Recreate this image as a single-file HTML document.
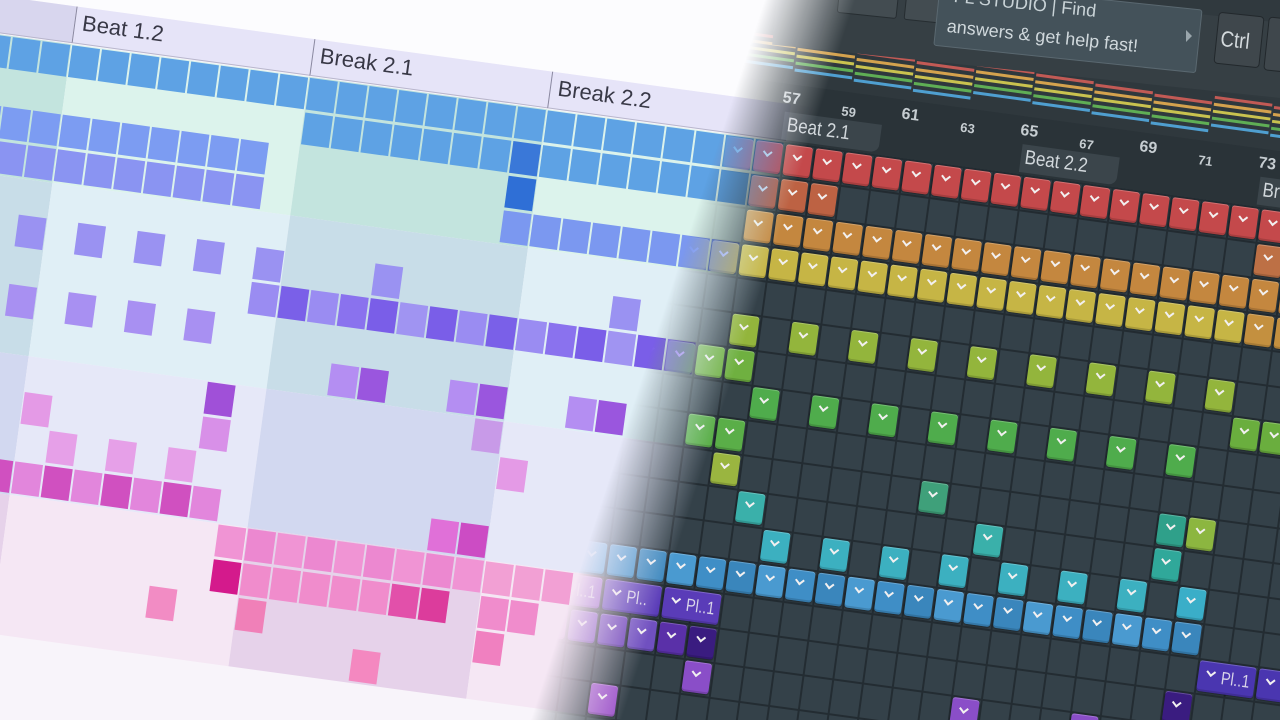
<!DOCTYPE html>
<html><head><meta charset="utf-8">
<style>
html,body{margin:0;padding:0;width:1280px;height:720px;overflow:hidden;background:#fbfafd;}
.layer{position:absolute;left:0;top:0;width:1280px;height:720px;overflow:hidden;}
#light{background:#f8f4fa;}
#dark{background:#2c363c;-webkit-mask-image:linear-gradient(108deg,transparent 50.5%,#000 56.5%);mask-image:linear-gradient(108deg,transparent 50.5%,#000 56.5%);}
.fr{position:absolute;left:12px;top:36px;width:0;height:0;transform:rotate(7.8deg);transform-origin:0 0;}
.a{position:absolute;}
.lt{position:absolute;width:28px;height:32px;}
.dt{position:absolute;width:27px;height:31px;border-radius:3px;box-shadow:inset 0 1px 0 rgba(255,255,255,.22),inset 0 -2px 0 rgba(0,0,0,.15),0 1px 2px rgba(0,0,0,.5);}
.dt i{position:absolute;left:9px;top:7px;width:5px;height:5px;border-left:2px solid #f2f0f0;border-bottom:2px solid #f2f0f0;transform:rotate(-45deg);}
.dt b{position:absolute;left:23px;top:5px;font:normal 18px "Liberation Sans",sans-serif;color:#d8d4e8;transform:scaleX(.8);transform-origin:0 0;white-space:nowrap;}
.hl{position:absolute;font:22px "Liberation Sans",sans-serif;color:#383846;white-space:nowrap;}
.num{position:absolute;font:bold 15px "Liberation Sans",sans-serif;color:#c6cdd1;}
.lab{position:absolute;font:20px "Liberation Sans",sans-serif;color:#d2d8dc;transform:scaleX(.85);transform-origin:0 0;white-space:nowrap;}
</style></head><body>
<div id="light" class="layer"><div class="fr" id="lf"></div></div>
<div id="dark" class="layer">
  <div class="fr" id="df"></div>
  <div class="a" style="left:780px;top:-30px;width:560px;height:75px;background:#363f44;transform:rotate(6deg);transform-origin:0 0;"></div>
  <div class="a" style="left:838px;top:-12px;width:58px;height:26px;background:#434c51;border:1px solid #262d31;border-radius:3px;transform:rotate(6deg);"></div>
  <div class="a" style="left:905px;top:-8px;width:40px;height:28px;background:#434c51;border:1px solid #262d31;border-radius:3px;transform:rotate(6deg);"></div>
  <div class="a" style="left:940px;top:-18px;width:262px;height:62px;background:#44525a;border:1px solid #5a6870;border-radius:3px;transform:rotate(6deg);transform-origin:0 0;"></div>
  <div class="a" style="left:955px;top:-14px;font:18px 'Liberation Sans',sans-serif;color:#c8d2d6;transform:rotate(6deg);transform-origin:0 0;white-space:nowrap;">FL STUDIO | Find</div>
  <div class="a" style="left:948px;top:16px;font:18px 'Liberation Sans',sans-serif;color:#d0d8dc;transform:rotate(6deg);transform-origin:0 0;white-space:nowrap;">answers &amp; get help fast!</div>
  <div class="a" style="left:1186px;top:30px;width:0;height:0;border-left:6px solid #9aa6ac;border-top:6px solid transparent;border-bottom:6px solid transparent;"></div>
  <div class="a" style="left:1216px;top:14px;width:44px;height:50px;background:#3f474c;border:1px solid #22282c;border-radius:4px;transform:rotate(6deg);"></div>
  <div class="a" style="left:1222px;top:26px;font:22px 'Liberation Sans',sans-serif;color:#d4dadd;transform:rotate(6deg) scaleX(.85);transform-origin:0 0;">Ctrl</div>
  <div class="a" style="left:1266px;top:18px;width:30px;height:52px;background:#3f474c;border:1px solid #22282c;border-radius:4px;transform:rotate(6deg);"></div>
</div>
<script>
var C=30,R=35;
var lf=document.getElementById('lf'),df=document.getElementById('df');
function el(p,css,html,cls){var d=document.createElement('div');if(cls)d.className=cls;d.style.cssText=css;if(html)d.innerHTML=html;p.appendChild(d);return d;}
function rng(a,b,s){var r=[];for(var i=a;i<=b;i+=(s||1))r.push(i);return r;}
var bands=[[0,3,'#dcf3ec','#c3e4de'],[4,8,'#e0eff6','#c8dde8'],[9,12,'#e6e8f8','#d2d8f0'],[13,16,'#f5e7f4','#e6d2ea']];
var secs=[[-6,1,1],[2,9,0],[10,17,1],[18,27,0]];
bands.forEach(function(b){secs.forEach(function(s){
 el(lf,'position:absolute;left:'+(s[0]*C)+'px;top:'+(b[0]*R)+'px;width:'+((s[1]-s[0]+1)*C)+'px;height:'+((b[1]-b[0]+1)*R)+'px;background:'+(s[2]?b[3]:b[2]));});});
el(lf,'position:absolute;left:-300px;top:-400px;width:1200px;height:362px;background:#fcfcfe');
el(lf,'position:absolute;left:-200px;top:-38px;width:'+(200+2*C)+'px;height:36px;background:#d8d6ee;border-bottom:1px solid #b8b6cc');
[[2,'Beat 1.2'],[10,'Break 2.1'],[18,'Break 2.2']].forEach(function(h){
 el(lf,'position:absolute;left:'+(h[0]*C)+'px;top:-38px;width:'+(8*C)+'px;height:36px;background:#e6e4f8;border-left:1px solid #8a88a0;border-bottom:1px solid #b8b6cc');
 el(lf,'left:'+(h[0]*C+8)+'px;top:-35px','<span>'+h[1]+'</span>','hl');});
function L(r,cols,c){cols.forEach(function(k,i){var col=Array.isArray(c)?c[i%c.length]:c;
 el(lf,'left:'+(k*C+1)+'px;top:'+(r*R+1)+'px;background:'+col,'','lt');});}
L(0,rng(-4,25),'#5ea2e4');
L(1,rng(10,16),'#5ea2e4');L(1,[17],'#3a78d8');L(1,rng(18,25),'#5ea2e4');
L(2,rng(-4,8),'#7c9cf2');L(2,[17],'#2f6fd6');
L(3,rng(-4,8),'#8a94f2');L(3,rng(17,24),'#7b98f0');
L(5,[1,3,5,7,9,13,21],'#9a92f2');
L(6,rng(9,23),['#9a8cf2','#7a60e8','#9a8cf2','#8a72ee','#7a5ee8','#a094f2','#7a5ee8']);
L(7,[1,3,5,7],'#a890f2');
L(8,[12,16,20],'#b48ef2');L(8,[13,17,21],'#9a56de');
L(9,[8],'#a050d8');L(9,[17],'#c89ae8');
L(10,[2,18],'#e49ae6');L(10,[8],'#d890e8');
L(11,[3,5,7],'#e6a0e8');
L(12,rng(-3,8),['#d050c0','#e286dc']);L(12,[16],'#e070d8');L(12,[17],'#cc4cc4');
L(13,rng(9,17),['#f094d4','#ec88d0']);L(13,rng(18,20),'#f2a0d4');
L(14,[9],'#d41a8c');L(14,rng(10,14),'#f08ccc');L(14,[15],'#e250aa');L(14,[16],'#dc3c9c');L(14,[18,19],'#f08ccc');
L(15,[0,7],'#f28cc4');L(15,[10],'#f080b8');L(15,[18],'#f080c0');
L(16,[14],'#f488c0');
el(df,'position:absolute;left:'+(16*C)+'px;top:0;width:'+(32*C)+'px;height:'+(24*R)+'px;background-color:#344149;background-image:linear-gradient(90deg,#232c32 0 2px,transparent 2px),linear-gradient(#232c32 0 2px,transparent 2px);background-size:30px 35px');
el(df,'position:absolute;left:'+(16*C)+'px;top:-300px;width:'+(32*C)+'px;height:300px;background:#30393e');
el(df,'position:absolute;left:'+(16*C)+'px;top:-58px;width:'+(32*C)+'px;height:58px;background:#2a3338');
el(df,'position:absolute;left:'+(16*C)+'px;top:-108px;width:'+(32*C)+'px;height:50px;background:#2f383d');
var sc=['#c25a55','#d4a24e','#c9c24f','#5fae55','#4f9fd0'];
for(var k=16;k<48;k+=2){var off=((k/2)%4)*2;sc.forEach(function(c,i){
 el(df,'position:absolute;left:'+(k*C)+'px;top:'+(-104+off+i*7)+'px;width:'+(2*C-2)+'px;height:3px;background:'+c);});}
for(var n=0;n<10;n++){var col=26+2*n,big=(n%2==0);
 el(df,'left:'+(col*C-8)+'px;top:'+(big?-52:-46)+'px;font-size:'+(big?'16px':'13px'),''+(57+2*n),'num');}
[[26,'Beat 2.1'],[34,'Beat 2.2'],[42,'Break']].forEach(function(h){
 el(df,'position:absolute;left:'+(h[0]*C-4)+'px;top:-30px;width:'+(3*C+8)+'px;height:28px;background:#3b454b;border-radius:0 0 8px 0');
 el(df,'left:'+(h[0]*C)+'px;top:-28px',h[1],'lab');});
function D(r,cols,c,txt,w){cols.forEach(function(k,i){var col=Array.isArray(c)?c[i%c.length]:c;
 el(df,'left:'+(k*C+1.5)+'px;top:'+(r*R+2)+'px;background:'+col+(w?';width:'+(w*C-3)+'px':''),'<i></i>'+(txt?'<b>'+txt+'</b>':''),'dt');});}
D(0,rng(22,46),'#c4494b');
D(1,rng(25,27),'#bd6243');D(1,rng(42,46),'#bd7045');
D(2,rng(25,46),'#c4873f');
D(3,rng(21,41),'#c6b545');D(3,rng(42,46),'#c4903f');
D(5,rng(25,41,2),'#93b53c');
D(6,[22,23,24,25],'#6fb040');D(6,[42,43,44],'#6aae3e');
D(7,rng(26,40,2),'#4fac4c');
D(8,[24,25],'#5aae48');
D(9,[25],'#9ab540');D(9,[32],'#3fa07a');D(9,[40],'#2fa08a');D(9,[41],'#8cb640');
D(10,[26,34],'#3ab0aa');D(10,[40],'#30a89a');
D(11,rng(27,39,2),'#3cb0c0');D(11,[41],'#3aaec8');
D(12,rng(21,41),['#4a9ad0','#3f8ec6','#3a86bc']);
D(13,[20],'#8a52c8','Pl..1',2);D(13,[22],'#5a3cb8','Pl..',2);D(13,[24],'#5a3cb8','Pl..1',2);D(13,[42,44],'#4a36b0','Pl..1',2);
D(14,[19,20],'#b060c8');D(14,[21],'#7a48c0');D(14,[22],'#6a40b8');D(14,[23],'#7050c0');D(14,[24],'#5a30a8');D(14,[25],'#3a1c80');D(14,[41],'#3a1c80');
D(15,[25,34,38],'#8a4ec8');
D(16,[22],'#9a50c8');
</script>
</body></html>
